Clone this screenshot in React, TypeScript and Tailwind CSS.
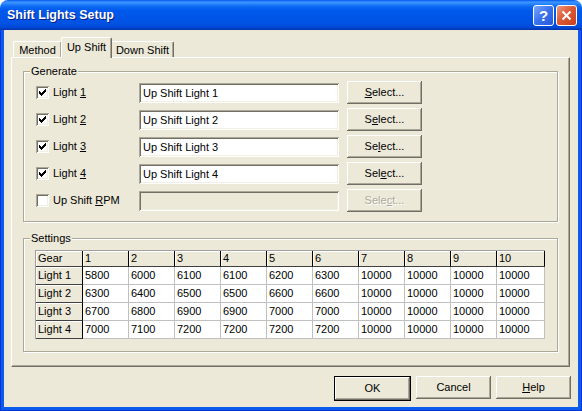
import React from 'react';

const raised =
  'shadow-[inset_-1px_-1px_0_#716F64,inset_1px_1px_0_#FFFFFF,inset_-2px_-2px_0_#ACA899]';
const sunken =
  'shadow-[inset_1px_1px_0_#ACA899,inset_-1px_-1px_0_#FFFFFF,inset_2px_2px_0_#716F64,inset_-2px_-2px_0_#F1EFE2]';
const headCell =
  'flex items-center pl-[2px] bg-[#ECE9D8] border-r border-b border-r-black border-b-[#404040] shadow-[inset_1px_1px_0_#FFFFFF]';

const Mn: React.FC<{ text: string; at: number }> = ({ text, at }) => (
  <>
    {text.slice(0, at)}
    <u className="underline underline-offset-[1px]">{text[at]}</u>
    {text.slice(at + 1)}
  </>
);

const CheckMark = () => (
  <svg width="7" height="7" viewBox="0 0 7 7" shapeRendering="crispEdges">
    <path d="M0 2 L2 4 L6 0 L7 0 L7 3 L2 7 L0 5 Z" className="fill-black" />
  </svg>
);

const Checkbox: React.FC<{ checked?: boolean }> = ({ checked }) => (
  <div className={`flex h-[13px] w-[13px] shrink-0 items-center justify-center bg-white ${sunken}`}>
    {checked && <CheckMark />}
  </div>
);

const Button: React.FC<{ children: React.ReactNode; disabled?: boolean; className?: string }> = ({
  children,
  disabled,
  className = '',
}) => (
  <div
    className={`flex h-[23px] w-[75px] shrink-0 items-center justify-center bg-[#ECE9D8] ${raised} ${
      disabled ? 'text-[#ACA899] [text-shadow:1px_1px_0_#FFFFFF]' : ''
    } ${className}`}
  >
    <span>{children}</span>
  </div>
);

const rows = [
  { label: 'Light 1', lu: 6, value: 'Up Shift Light 1', su: 0, checked: true },
  { label: 'Light 2', lu: 6, value: 'Up Shift Light 2', su: 1, checked: true },
  { label: 'Light 3', lu: 6, value: 'Up Shift Light 3', su: 2, checked: true },
  { label: 'Light 4', lu: 6, value: 'Up Shift Light 4', su: 3, checked: true },
];

const gears = ['1', '2', '3', '4', '5', '6', '7', '8', '9', '10'];
const settings = [
  ['Light 1', '5800', '6000', '6100', '6100', '6200', '6300', '10000', '10000', '10000', '10000'],
  ['Light 2', '6300', '6400', '6500', '6500', '6600', '6600', '10000', '10000', '10000', '10000'],
  ['Light 3', '6700', '6800', '6900', '6900', '7000', '7000', '10000', '10000', '10000', '10000'],
  ['Light 4', '7000', '7100', '7200', '7200', '7200', '7200', '10000', '10000', '10000', '10000'],
];

export default function App() {
  return (
    <div className="h-[411px] w-[582px] bg-white font-['Liberation_Sans',Arial,sans-serif] text-[11px] leading-[13px] text-black">
      <div className="flex h-full w-full flex-col overflow-hidden rounded-t-[8px]">
        {/* title bar */}
        <div className="flex h-[30px] shrink-0 items-center bg-[linear-gradient(180deg,#0058EE_0%,#3D95FF_7%,#2A85FB_13%,#0B69F3_22%,#0059EC_35%,#0055E7_60%,#0052E2_80%,#0047D2_92%,#0033A8_100%)] pl-[7px] pr-[5px]">
          <span className="pt-[1px] text-[12.5px] font-bold text-white [text-shadow:1px_1px_0_#0A1E80]">
            Shift Lights Setup
          </span>
          <div className="ml-auto flex gap-[2px]">
            <div className="flex h-[21px] w-[21px] items-center justify-center rounded-[3px] border border-white bg-[linear-gradient(135deg,#7AA7FB_0%,#3A72EE_50%,#2358DC_100%)] text-[15px] font-bold leading-none text-white">
              ?
            </div>
            <div className="flex h-[21px] w-[21px] items-center justify-center rounded-[3px] border border-white bg-[linear-gradient(135deg,#EC9A80_0%,#DD5A36_45%,#C8401E_100%)]">
              <svg width="11" height="11" viewBox="0 0 11 11">
                <path d="M1.5 1.5 L9.5 9.5 M9.5 1.5 L1.5 9.5" stroke="white" strokeWidth="2" />
              </svg>
            </div>
          </div>
        </div>

        {/* window frame */}
        <div className="flex flex-1 border-x border-b border-[#0831D9] bg-[#0A5CEC] px-[3px] pb-[3px]">
          <div className="flex flex-1 flex-col bg-[#ECE9D8] pl-[7px] pr-[8px] pt-[7px]">
            {/* tabs */}
            <div className="flex h-[20px] items-end pl-[2px]">
              <div className="flex h-[16px] w-[48px] justify-center rounded-tl-[2px] border-l border-t border-white pt-[2px] shadow-[inset_-1px_0_0_#ACA899]">
                Method
              </div>
              <div className="relative z-10 -mb-px flex h-[21px] w-[51px] justify-center rounded-t-[2px] border-l border-r border-t border-white border-r-[#716F64] bg-[#ECE9D8] pt-[3px] shadow-[inset_-1px_0_0_#ACA899]">
                Up Shift
              </div>
              <div className="flex h-[16px] w-[62px] justify-center rounded-tr-[2px] border-r border-t border-white border-r-[#716F64] pt-[2px] shadow-[inset_-1px_0_0_#ACA899]">
                Down Shift
              </div>
            </div>

            {/* tab panel */}
            <div className="h-[310px] border border-[#716F64] border-l-white border-t-white px-[11px] pt-[7px] shadow-[inset_-1px_-1px_0_#ACA899]">
              <fieldset className="border border-[#ACA899] shadow-[inset_1px_1px_0_#FFFFFF,1px_1px_0_#FFFFFF]">
                <legend className="ml-[6px] bg-[#ECE9D8] px-[1px] leading-[13px]">Generate</legend>
                <div className="flex flex-col gap-[4px] pb-[9px] pl-[12px] pt-[3px]">
                  {rows.map((r) => (
                    <div key={r.label} className="flex h-[23px] items-center">
                      <Checkbox checked={r.checked} />
                      <span className="ml-[4px] w-[86px] shrink-0">
                        <Mn text={r.label} at={r.lu} />
                      </span>
                      <div className={`h-[20px] w-[200px] shrink-0 bg-white pl-[4px] leading-[20px] ${sunken}`}>
                        {r.value}
                      </div>
                      <Button className="ml-[8px]">
                        <Mn text="Select..." at={r.su} />
                      </Button>
                    </div>
                  ))}
                  <div className="flex h-[23px] items-center">
                    <Checkbox />
                    <span className="ml-[4px] w-[86px] shrink-0">
                      <Mn text="Up Shift RPM" at={9} />
                    </span>
                    <div className={`h-[20px] w-[200px] shrink-0 bg-[#ECE9D8] ${sunken}`} />
                    <Button className="ml-[8px]" disabled>
                      <Mn text="Select..." at={4} />
                    </Button>
                  </div>
                </div>
              </fieldset>

              <fieldset className="mt-[10px] border border-[#ACA899] shadow-[inset_1px_1px_0_#FFFFFF,1px_1px_0_#FFFFFF]">
                <legend className="ml-[6px] bg-[#ECE9D8] px-[1px] leading-[13px]">Settings</legend>
                <div className="pb-[12px] pl-[11px] pt-[5px]">
                  <div className="grid w-[510px] grid-cols-[47px_repeat(9,46px)_48px] border-l border-t border-[#A0A0A0] bg-white">
                    <div className={`h-[16px] ${headCell}`}>Gear</div>
                    {gears.map((g) => (
                      <div key={g} className={`h-[16px] ${headCell}`}>
                        {g}
                      </div>
                    ))}
                    {settings.map((row) =>
                      row.map((v, i) =>
                        i === 0 ? (
                          <div key={row[0] + i} className={`h-[18px] ${headCell}`}>
                            {v}
                          </div>
                        ) : (
                          <div
                            key={row[0] + i}
                            className="flex h-[18px] items-center border-b border-r border-[#C0C0C0] pl-[2px]"
                          >
                            {v}
                          </div>
                        ),
                      ),
                    )}
                  </div>
                </div>
              </fieldset>
            </div>

            {/* footer buttons */}
            <div className="-mr-px mt-[9px] flex justify-end gap-[5px]">
              <div className="border border-black">
                <Button className="h-[21px] w-[73px]">OK</Button>
              </div>
              <Button>Cancel</Button>
              <Button>
                <Mn text="Help" at={0} />
              </Button>
            </div>
          </div>
        </div>
      </div>
    </div>
  );
}
